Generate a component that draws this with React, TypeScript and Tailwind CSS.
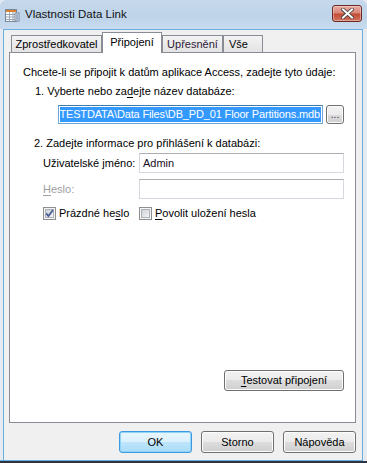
import React from "react";

const WindowIcon = () => (
  <svg width="16" height="16" viewBox="0 0 16 16" className="shrink-0">
    <rect x="1.5" y="2.5" width="11" height="12" fill="#fff" stroke="#7a8699" />
    <rect x="2" y="3" width="10" height="2" fill="#d9822b" />
    <path d="M2 7.5h10M2 10h10M2 12.5h10M5.5 5v9.5M9 5v9.5" stroke="#9aa6b8" strokeWidth="1" />
    <rect x="11" y="6" width="4" height="8" fill="#e8eef6" stroke="#7a8699" />
    <path d="M12 8h2M12 10h2M12 12h2" stroke="#5672a8" />
  </svg>
);

const CloseButton = () => (
  <div className="flex h-[17px] w-[30px] items-center justify-center rounded-[3px] border border-[#6b2a24] bg-[linear-gradient(#e9a99f_0%,#d98677_48%,#c24a34_52%,#d2745e_100%)] shadow-[inset_0_0_0_1px_rgba(255,255,255,0.35)]">
    <svg width="13" height="11" viewBox="0 0 13 11">
      <path d="M2 1.5l9 8M11 1.5l-9 8" stroke="#3b3b3b" strokeWidth="3.6" strokeLinecap="square" />
      <path d="M2 1.5l9 8M11 1.5l-9 8" stroke="#fff" strokeWidth="2" strokeLinecap="square" />
    </svg>
  </div>
);

const Button = ({
  children,
  primary = false,
  className = "",
}: {
  children: React.ReactNode;
  primary?: boolean;
  className?: string;
}) => (
  <div
    className={`flex items-center justify-center rounded-[3px] border ${
      primary
        ? "border-[#3c9ae0] bg-[linear-gradient(#eaf6fd_0%,#d9f0fc_50%,#bee6fd_50%,#a9dbf6_100%)] shadow-[inset_0_0_0_1px_#8fd3f8]"
        : "border-[#707070] bg-[linear-gradient(#f2f2f2_0%,#ebebeb_50%,#dddddd_50%,#cfcfcf_100%)] shadow-[inset_0_0_0_1px_#fcfcfc]"
    } ${className}`}
  >
    {children}
  </div>
);

const CheckBox = ({ checked }: { checked: boolean }) => (
  <svg width="13" height="13" viewBox="0 0 13 13" className="shrink-0">
    <defs>
      <linearGradient id="cbg" x1="0" y1="0" x2="1" y2="1">
        <stop offset="0" stopColor="#cbcfd5" />
        <stop offset="1" stopColor="#f6f6f6" />
      </linearGradient>
    </defs>
    <rect x="0.5" y="0.5" width="12" height="12" fill="#f4f4f4" stroke="#8e8f8f" />
    <rect x="2.5" y="2.5" width="8" height="8" fill="url(#cbg)" stroke="#aeb3b9" />
    {checked && (
      <path d="M3.2 6.4l2.2 2.6 4.6-6" fill="none" stroke="#4a5f97" strokeWidth="1.8" />
    )}
  </svg>
);

const Tab = ({ label, active = false, className = "" }: { label: React.ReactNode; active?: boolean; className?: string }) => (
  <div
    className={
      active
        ? `relative z-10 -mb-px flex h-[21px] items-start justify-center border border-b-0 border-[#898c95] bg-white pt-[2px] ${className}`
        : `flex h-[17px] items-center justify-center border border-b-0 border-[#898c95] bg-[linear-gradient(#f3f3f3,#e3e3e3)] ${className}`
    }
  >
    {label}
  </div>
);

const TextField = ({ children, className = "" }: { children?: React.ReactNode; className?: string }) => (
  <div
    className={`flex h-[20px] items-center border border-[#d5d8de] border-t-[#abadb3] bg-white px-[3px] ${className}`}
  >
    {children}
  </div>
);

export default function App() {
  return (
    <div className="flex h-[463px] w-[367px] flex-col overflow-hidden bg-[#e6ebf1] font-['Liberation_Sans',Arial,sans-serif] text-[11px] leading-[15px] text-black">
      {/* title bar */}
      <div className="flex h-[29px] items-center rounded-t-[6px] bg-[linear-gradient(#c5d8ec,#bfd4e9_60%,#c9dbee)] pr-[5px] pl-[4px]">
        <WindowIcon />
        <span className="ml-[5px] flex-1 text-[11.5px] text-[#111]">Vlastnosti Data Link</span>
        <div className="-mt-[2px]">
          <CloseButton />
        </div>
      </div>

      {/* client */}
      <div className="flex flex-1 pl-[3px] pr-[4px]">
        <div className="flex flex-1 flex-col border border-b-0 border-[#6aaedf] bg-[#f0f0f0] pt-[2px] pr-[6px] pb-[7px] pl-[5px]">
          {/* tabs */}
          <div className="flex h-[20px] items-end pl-[2px]">
            <Tab label="Zprostředkovatel" className="w-[91px]" />
            <Tab label="Připojení" active className="w-[60px]" />
            <Tab label={<span className="text-[#2d1838]">Upřesnění</span>} className="w-[61px]" />
            <Tab label="Vše" className="w-[40px] justify-start pl-[5px]" />
          </div>

          {/* panel */}
          <div className="flex h-[371px] flex-col border border-[#898c95] bg-white pt-[12px] pr-[11px] pl-[13px]">
            <div>Chcete-li se připojit k datům aplikace Access, zadejte tyto údaje:</div>
            <div className="mt-[4px] pl-[12px]">
              1. Vyberte nebo za<span className="underline underline-offset-2">d</span>ejte název databáze:
            </div>
            <div className="mt-[6px] flex pl-[35px]">
              <div className="flex h-[19px] w-[265px] items-center overflow-hidden border border-[#6fa6da] border-t-[#3d7bad] bg-white p-[1px]">
                <div className="flex h-full flex-1 items-center justify-end overflow-hidden whitespace-nowrap bg-[#3399ff] pr-[1px] tracking-[-0.15px] text-white">
                  TESTDATA\Data Files\DB_PD_01 Floor Partitions.mdb
                </div>
              </div>
              <Button className="ml-[3px] h-[19px] w-[18px] items-end pb-[3px]">
                <span className="text-[10px] leading-[10px] text-[#4b1f5c]">...</span>
              </Button>
            </div>
            <div className="mt-[12px] pl-[11px]">2. Zadejte informace pro přihlášení k databázi:</div>
            <div className="mt-[2px] flex items-center pl-[20px]">
              <span className="w-[96px]">
                Uživatelské <span className="underline underline-offset-2">j</span>méno:
              </span>
              <TextField className="flex-1">
                <span className="text-[#1a1024]">Admin</span>
              </TextField>
            </div>
            <div className="mt-[6px] flex items-center pl-[20px]">
              <span className="w-[96px] text-[#a0a0a0]">
                <span className="underline underline-offset-2">H</span>eslo:
              </span>
              <TextField className="flex-1" />
            </div>
            <div className="mt-[7px] flex items-center pl-[20px]">
              <div className="flex w-[96px] items-center gap-[3px]">
                <CheckBox checked />
                <span>
                  Prázdné he<span className="underline underline-offset-2">s</span>lo
                </span>
              </div>
              <div className="flex items-center gap-[3px]">
                <CheckBox checked={false} />
                <span>
                  <span className="underline underline-offset-2">P</span>ovolit uložení hesla
                </span>
              </div>
            </div>
            <div className="mt-auto mb-[31px] flex justify-end">
              <Button className="h-[21px] w-[120px]">
                <span>
                  <span className="underline underline-offset-2">T</span>estovat připojení
                </span>
              </Button>
            </div>
          </div>

          {/* dialog buttons */}
          <div className="mt-[8px] flex justify-end gap-[9px]">
            <Button primary className="h-[22px] w-[73px]">
              OK
            </Button>
            <Button className="h-[22px] w-[73px]">Storno</Button>
            <Button className="h-[22px] w-[73px]">Nápověda</Button>
          </div>
        </div>
      </div>
      <div className="mr-[4px] h-[1px] bg-[#6aaedf]" />
      <div className="h-[2px] bg-[#2b3440]" />
    </div>
  );
}
